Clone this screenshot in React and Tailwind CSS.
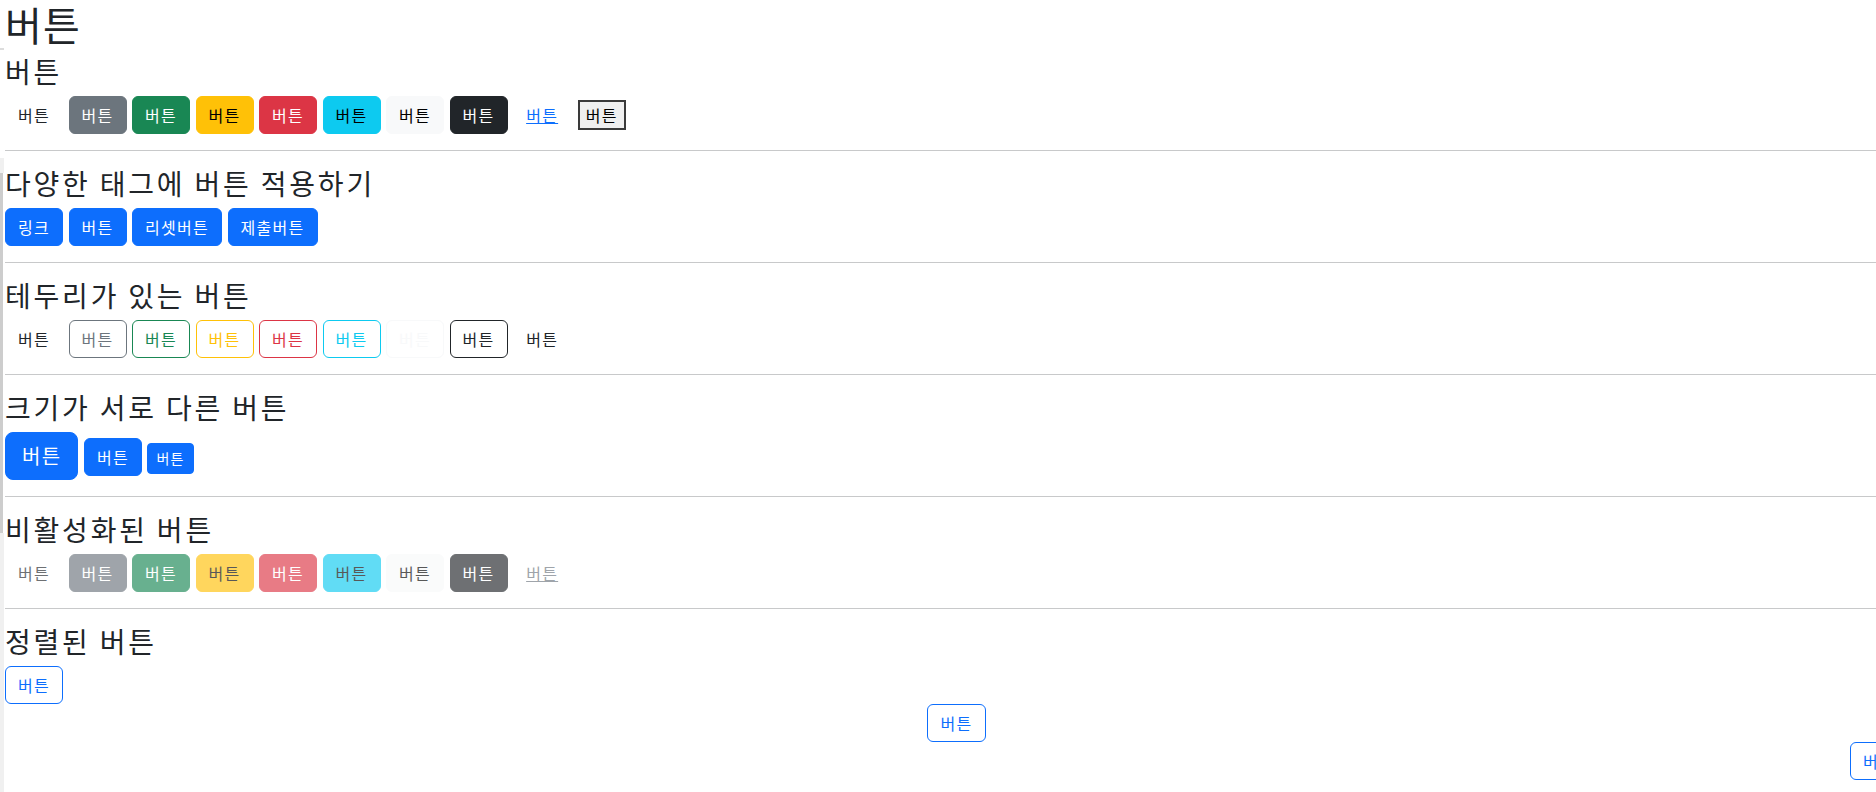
import React from "react";

const solid = {
    plain: "border-transparent text-[#212529]",
    primary: "bg-[#0d6efd] border-[#0d6efd] text-white",
    secondary: "bg-[#6c757d] border-[#6c757d] text-white",
    success: "bg-[#198754] border-[#198754] text-white",
    warning: "bg-[#ffc107] border-[#ffc107] text-black",
    danger: "bg-[#dc3545] border-[#dc3545] text-white",
    info: "bg-[#0dcaf0] border-[#0dcaf0] text-black",
    light: "bg-[#f8f9fa] border-[#f8f9fa] text-black",
    dark: "bg-[#212529] border-[#212529] text-white",
    link: "border-transparent text-[#0d6efd] underline",
    linkOff: "border-transparent text-[#6c757d] underline",
};

const outline = {
    plain: "border-transparent text-[#212529]",
    primary: "border-[#0d6efd] text-[#0d6efd]",
    secondary: "border-[#6c757d] text-[#6c757d]",
    success: "border-[#198754] text-[#198754]",
    warning: "border-[#ffc107] text-[#ffc107]",
    danger: "border-[#dc3545] text-[#dc3545]",
    info: "border-[#0dcaf0] text-[#0dcaf0]",
    light: "border-[#f8f9fa] text-[#f8f9fa]",
    dark: "border-[#212529] text-[#212529]",
};

const sizes = {
    md: "px-3 py-[6px] text-base leading-6 rounded-[6px]",
    lg: "px-4 py-2 text-xl leading-[30px] rounded-[8px]",
    sm: "px-2 py-1 text-sm leading-[21px] rounded-[4px]",
};

const Btn = ({ look = "plain", kind = "solid", size = "md", disabled, block, align, children }) => {
    const colours = kind === "outline" ? outline[look] : solid[look];
    return (
        <span
            className={`${block ? "block w-fit" : "inline-block"} ${align || ""} shrink-0 border border-solid text-center whitespace-nowrap ${sizes[size]} ${colours} ${disabled ? "opacity-[.65]" : ""}`}
        >
            {children}
        </span>
    );
};

const Heading = ({ children }) => (
    <h3 className="text-[28px] leading-[33px] font-normal mb-2 tracking-[0.1em] text-[#212529]">
        {children}
    </h3>
);

const Row = ({ children, baseline }) => (
    <div className={`flex gap-x-[5.5px] ${baseline ? "items-baseline" : "items-center"}`}>{children}</div>
);

const Rule = () => <hr className="my-4 border-0 border-t border-solid border-[#c8c9ca]" />;

const colours = ["secondary", "success", "warning", "danger", "info", "light", "dark"];

export default function App() {
    return (
        <div
            className="flex w-[1876px] h-[792px] overflow-hidden bg-white text-[#212529] tracking-[0.08em]"
            style={{ fontFamily: '"Noto Sans CJK KR", "Noto Sans", sans-serif' }}
        >
            {/* left scroll strip */}
            <div className="w-[4px] shrink-0 flex flex-col">
                <div className="h-[48px]" />
                <div className="h-[2px] bg-[#dcdcdc]" />
                <div className="h-[108px]" />
                <div className="h-[15px] bg-[#f0f0f0]" />
                <div className="h-[360px] w-[3px] bg-[#cdcdcd]" />
                <div className="flex-1 bg-[#f0f0f0]" />
            </div>

            <div className="w-[1904px] shrink-0 pl-[1px]">
                <h1 className="text-[40px] leading-[48px] font-normal mb-[7px]">버튼</h1>

                <section>
                    <Heading>버튼</Heading>
                    <Row>
                        <Btn>버튼</Btn>
                        {colours.map(c => (
                            <Btn key={c} look={c}>버튼</Btn>
                        ))}
                        <Btn look="link">버튼</Btn>
                        <span className="ml-[1px] inline-block px-[6px] py-px border-2 border-solid border-[#3a3a3a] bg-[#efefef] text-black text-base leading-6">
                            버튼
                        </span>
                    </Row>
                </section>
                <Rule />

                <section>
                    <Heading>다양한 태그에 버튼 적용하기</Heading>
                    <Row>
                        <Btn look="primary">링크</Btn>
                        <Btn look="primary">버튼</Btn>
                        <Btn look="primary">리셋버튼</Btn>
                        <Btn look="primary">제출버튼</Btn>
                    </Row>
                </section>
                <Rule />

                <section>
                    <Heading>테두리가 있는 버튼</Heading>
                    <Row>
                        <Btn kind="outline">버튼</Btn>
                        {colours.map(c => (
                            <Btn key={c} kind="outline" look={c}>버튼</Btn>
                        ))}
                        <Btn kind="outline">버튼</Btn>
                    </Row>
                </section>
                <Rule />

                <section>
                    <Heading>크기가 서로 다른 버튼</Heading>
                    <Row baseline>
                        <Btn look="primary" size="lg">버튼</Btn>
                        <Btn look="primary">버튼</Btn>
                        <Btn look="primary" size="sm">버튼</Btn>
                    </Row>
                </section>
                <Rule />

                <section>
                    <Heading>비활성화된 버튼</Heading>
                    <Row>
                        <Btn disabled>버튼</Btn>
                        {colours.map(c => (
                            <Btn key={c} look={c} disabled>버튼</Btn>
                        ))}
                        <Btn look="linkOff" disabled>버튼</Btn>
                    </Row>
                </section>
                <Rule />

                <section>
                    <Heading>정렬된 버튼</Heading>
                    <Btn kind="outline" look="primary" block>버튼</Btn>
                    <Btn kind="outline" look="primary" block align="mx-auto">버튼</Btn>
                    <Btn kind="outline" look="primary" block align="ml-auto">버튼</Btn>
                </section>
            </div>
        </div>
    );
}
